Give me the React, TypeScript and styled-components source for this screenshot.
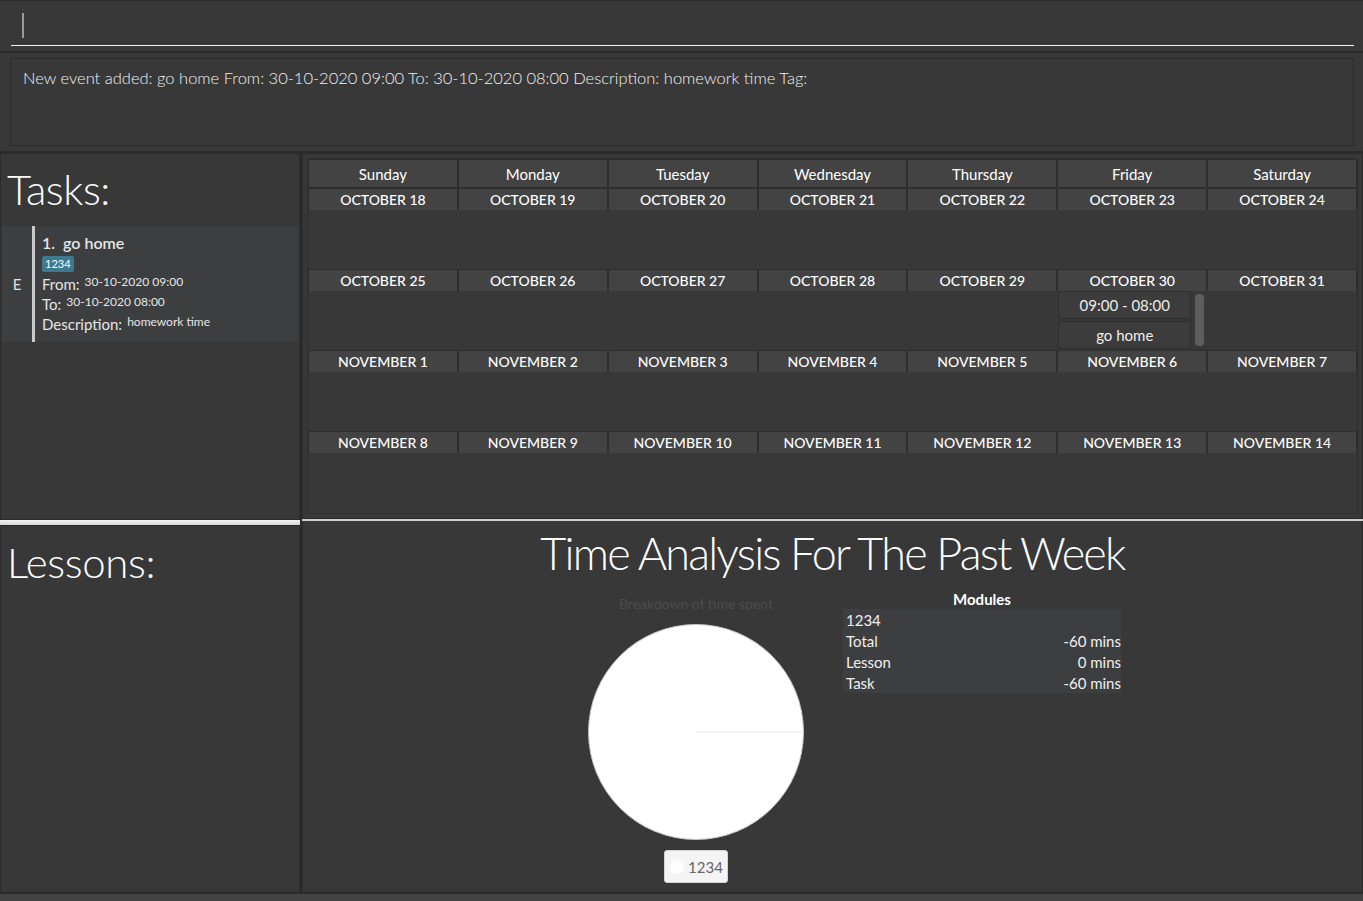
import React from "react";
import styled, { createGlobalStyle } from "styled-components";

const DARK = "#2b2b2b";
const BG = "#383838";
const CELL = "#434343";

const GlobalStyle = createGlobalStyle`
  html, body { margin: 0; padding: 0; background: ${BG}; }
  body { font-family: "Lato", "Open Sans", sans-serif; color: #fff; }
  * { box-sizing: border-box; }
`;

const Window = styled.div`
  width: 100%;
  height: 901px;
  display: flex;
  flex-direction: column;
  background: ${BG};
  overflow: hidden;
`;

const CommandSection = styled.div`
  height: 53px;
  flex: none;
  border-top: 1px solid ${DARK};
  border-bottom: 2px solid ${DARK};
  padding: 0 9px 0 11px;
`;

const CommandInput = styled.div`
  height: 45px;
  border-bottom: 1px solid #f2f2f2;
  padding: 12px 0 0 11px;
`;

const Caret = styled.div`
  width: 2px;
  height: 25px;
  background: #9a9a9a;
`;

const ResultSection = styled.div`
  height: 100px;
  flex: none;
  padding: 5px 9px 5px 10px;
  border-bottom: 2px solid ${DARK};
`;

const ResultBox = styled.div`
  height: 88px;
  border: 1px solid ${DARK};
  padding: 7px 12px;
  font-size: 16.5px;
  font-weight: 300;
  line-height: 24px;
  color: #f2f2f2;
`;

const Main = styled.div`
  flex: 1;
  display: flex;
  min-height: 0;
`;

const LeftColumn = styled.div`
  width: 300px;
  flex: none;
  display: flex;
  flex-direction: column;
`;

const Panel = styled.div<{ $h?: number }>`
  border: 1px solid ${DARK};
  ${(p) => (p.$h ? `height: ${p.$h}px; flex: none;` : "flex: 1;")}
  display: flex;
  flex-direction: column;
`;

const PanelTitle = styled.div<{ $top: number; $h?: number }>`
  font-size: 42px;
  font-weight: 300;
  letter-spacing: -0.4px;
  line-height: 60px;
  padding: ${(p) => p.$top}px 0 0 6px;
  ${(p) => (p.$h ? `height: ${p.$h}px;` : "")}
  color: #fff;
`;

const ThickSplitter = styled.div`
  height: 5px;
  flex: none;
  background: linear-gradient(#f4f4f4, #d6d6d6);
`;

const ThinSplitter = styled.div`
  height: 2px;
  flex: none;
  background: #cdcdcd;
`;

const ColumnGap = styled.div`
  width: 2px;
  flex: none;
  background: ${DARK};
`;

const RightColumn = styled.div`
  flex: 1;
  display: flex;
  flex-direction: column;
`;

/* ---------- task card ---------- */
const Card = styled.div`
  height: 116px;
  margin: 0 0 0 1px;
  background: #3c3e40;
  display: flex;
`;

const CardType = styled.div`
  width: 30px;
  display: flex;
  align-items: center;
  justify-content: center;
  font-size: 15px;
  color: #e2e2e2;
`;

const CardBar = styled.div`
  width: 3px;
  background: #c8c8c8;
`;

const CardBody = styled.div`
  padding: 7px 0 0 7px;
  display: flex;
  flex-direction: column;
  align-items: flex-start;
`;

const CardTitle = styled.div`
  font-size: 16px;
  font-weight: 600;
  line-height: 20px;
  color: #e6e6e6;
  white-space: pre;
`;

const Tag = styled.div`
  margin-top: 3px;
  height: 16px;
  padding: 0 3px;
  background: #3d7a90;
  color: #fff;
  font-size: 11px;
  line-height: 16px;
  border-radius: 2px;
`;

const FieldRow = styled.div<{ $first?: boolean }>`
  display: flex;
  align-items: flex-start;
  gap: 5px;
  margin-top: ${(p) => (p.$first ? 2 : 0)}px;
  line-height: 20px;
`;

const FieldLabel = styled.span`
  font-size: 15px;
  color: #e6e6e6;
`;

const FieldValue = styled.span`
  font-size: 12px;
  line-height: 16px;
  color: #e6e6e6;
`;

/* ---------- calendar ---------- */
const CalendarPanel = styled.div`
  height: 366px;
  flex: none;
  border: 1px solid ${DARK};
  padding: 4px;
`;

const Calendar = styled.div`
  height: 100%;
  border: 1px solid #2e2e2e;
  display: flex;
  flex-direction: column;
  background: ${BG};
`;

const SevenCols = styled.div`
  display: grid;
  grid-template-columns: repeat(7, 1fr);
`;

const HeaderCell = styled.div`
  height: 29px;
  background: ${CELL};
  border: 1px solid #2e2e2e;
  display: flex;
  align-items: center;
  justify-content: center;
  font-size: 15px;
  color: #fff;
`;

const DayCell = styled.div`
  display: flex;
  flex-direction: column;
`;

const DateLabel = styled.div`
  height: 22px;
  background: ${CELL};
  border: 1px solid #2e2e2e;
  border-bottom: none;
  display: flex;
  align-items: center;
  justify-content: center;
  font-size: 14px;
  font-weight: 500;
  color: #fff;
`;

const DayBody = styled.div`
  height: 59px;
  display: flex;
  padding-left: 1px;
`;

const EventStack = styled.div`
  width: 133px;
  display: flex;
  flex-direction: column;
  gap: 2px;
`;

const EventBox = styled.div`
  height: 28px;
  background: #3c3c3c;
  border: 1px solid #2e2e2e;
  display: flex;
  align-items: center;
  justify-content: center;
  font-size: 15px;
  color: #ececec;
`;

const ScrollThumb = styled.div`
  width: 9px;
  height: 52px;
  margin: 3px 0 0 4px;
  border-radius: 4px;
  background: #5e5e5e;
`;

/* ---------- analysis ---------- */
const AnalysisPanel = styled.div`
  flex: 1;
  border: 1px solid ${DARK};
  border-top: none;
  display: flex;
  flex-direction: column;
`;

const AnalysisTitle = styled.div`
  font-size: 45px;
  font-weight: 300;
  letter-spacing: -1.8px;
  line-height: 56px;
  text-align: center;
  margin-top: 4px;
  color: #fff;
`;

const ChartRow = styled.div`
  display: flex;
  justify-content: center;
  align-items: flex-start;
  gap: 17px;
  padding-left: 22px;
  margin-top: 8px;
`;

const PieBlock = styled.div`
  width: 260px;
  display: flex;
  flex-direction: column;
  align-items: center;
`;

const PieTitle = styled.div`
  margin-top: 5px;
  font-size: 14px;
  line-height: 20px;
  color: #4c4c4c;
`;

const PieSvg = styled.svg`
  margin-top: 9px;
  display: block;
`;

const Legend = styled.div`
  margin-top: 9px;
  height: 33px;
  display: flex;
  align-items: center;
  gap: 4px;
  padding: 0 4px 0 5px;
  background: #f4f4f4;
  border: 1px solid #d4d4d4;
  border-radius: 3px;
  font-size: 15px;
  color: #666;
`;

const LegendDot = styled.div`
  width: 14px;
  height: 14px;
  border-radius: 50%;
  background: #fdfdfd;
`;

const ModulesBlock = styled.div`
  width: 278px;
  display: flex;
  flex-direction: column;
`;

const ModulesLabel = styled.div`
  font-size: 15px;
  font-weight: 700;
  line-height: 20px;
  text-align: center;
  color: #fff;
`;

const ModulesTable = styled.div`
  background: #3d3e40;
`;

const ModulesRow = styled.div`
  height: 21px;
  display: flex;
  justify-content: space-between;
  align-items: center;
  padding-left: 3px;
  font-size: 15px;
  color: #f0f0f0;
`;

const StatusBar = styled.div`
  height: 8px;
  flex: none;
  border-top: 1px solid ${DARK};
  background: #434343;
`;

const days = ["Sunday", "Monday", "Tuesday", "Wednesday", "Thursday", "Friday", "Saturday"];
const weeks = [
  ["OCTOBER 18", "OCTOBER 19", "OCTOBER 20", "OCTOBER 21", "OCTOBER 22", "OCTOBER 23", "OCTOBER 24"],
  ["OCTOBER 25", "OCTOBER 26", "OCTOBER 27", "OCTOBER 28", "OCTOBER 29", "OCTOBER 30", "OCTOBER 31"],
  ["NOVEMBER 1", "NOVEMBER 2", "NOVEMBER 3", "NOVEMBER 4", "NOVEMBER 5", "NOVEMBER 6", "NOVEMBER 7"],
  ["NOVEMBER 8", "NOVEMBER 9", "NOVEMBER 10", "NOVEMBER 11", "NOVEMBER 12", "NOVEMBER 13", "NOVEMBER 14"],
];

const moduleRows: [string, string][] = [
  ["1234", ""],
  ["Total", "-60 mins"],
  ["Lesson", "0 mins"],
  ["Task", "-60 mins"],
];

export default function App() {
  return (
    <Window>
      <GlobalStyle />
      <CommandSection>
        <CommandInput>
          <Caret />
        </CommandInput>
      </CommandSection>
      <ResultSection>
        <ResultBox>
          New event added: go home From: 30-10-2020 09:00 To: 30-10-2020 08:00 Description: homework time Tag:
        </ResultBox>
      </ResultSection>
      <Main>
        <LeftColumn>
          <Panel $h={367}>
            <PanelTitle $top={5} $h={72}>Tasks:</PanelTitle>
            <Card>
              <CardType>E</CardType>
              <CardBar />
              <CardBody>
                <CardTitle>{"1.  go home"}</CardTitle>
                <Tag>1234</Tag>
                <FieldRow $first>
                  <FieldLabel>From:</FieldLabel>
                  <FieldValue>30-10-2020 09:00</FieldValue>
                </FieldRow>
                <FieldRow>
                  <FieldLabel>To:</FieldLabel>
                  <FieldValue>30-10-2020 08:00</FieldValue>
                </FieldRow>
                <FieldRow>
                  <FieldLabel>Description:</FieldLabel>
                  <FieldValue>homework time</FieldValue>
                </FieldRow>
              </CardBody>
            </Card>
          </Panel>
          <ThickSplitter />
          <Panel>
            <PanelTitle $top={6}>Lessons:</PanelTitle>
          </Panel>
        </LeftColumn>
        <ColumnGap />
        <RightColumn>
          <CalendarPanel>
            <Calendar>
              <SevenCols>
                {days.map((d) => (
                  <HeaderCell key={d}>{d}</HeaderCell>
                ))}
              </SevenCols>
              {weeks.map((w, wi) => (
                <SevenCols key={wi}>
                  {w.map((date, di) => (
                    <DayCell key={date}>
                      <DateLabel>{date}</DateLabel>
                      <DayBody>
                        {wi === 1 && di === 5 && (
                          <>
                            <EventStack>
                              <EventBox>09:00 - 08:00</EventBox>
                              <EventBox>go home</EventBox>
                            </EventStack>
                            <ScrollThumb />
                          </>
                        )}
                      </DayBody>
                    </DayCell>
                  ))}
                </SevenCols>
              ))}
            </Calendar>
          </CalendarPanel>
          <ThinSplitter />
          <AnalysisPanel>
            <AnalysisTitle>Time Analysis For The Past Week</AnalysisTitle>
            <ChartRow>
              <PieBlock>
                <PieTitle>Breakdown of time spent</PieTitle>
                <PieSvg width="218" height="218" viewBox="0 0 218 218">
                  <circle cx="109" cy="109" r="107.5" fill="#ffffff" stroke="#c4c4c4" strokeWidth="1" />
                  <line x1="109" y1="109" x2="216.5" y2="109" stroke="#ececec" strokeWidth="1.5" />
                </PieSvg>
                <Legend>
                  <LegendDot />
                  1234
                </Legend>
              </PieBlock>
              <ModulesBlock>
                <ModulesLabel>Modules</ModulesLabel>
                <ModulesTable>
                  {moduleRows.map(([k, v]) => (
                    <ModulesRow key={k}>
                      <span>{k}</span>
                      <span>{v}</span>
                    </ModulesRow>
                  ))}
                </ModulesTable>
              </ModulesBlock>
            </ChartRow>
          </AnalysisPanel>
        </RightColumn>
      </Main>
      <StatusBar />
    </Window>
  );
}
